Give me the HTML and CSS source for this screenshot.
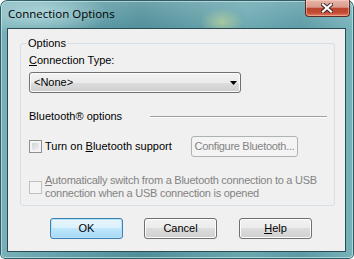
FILE: index.html
```html
<!DOCTYPE html>
<html>
<head>
<meta charset="utf-8">
<link rel="stylesheet" href="styles.css">
</head>
<body>
<div class="window">
  <div class="titlebar">
    <span class="title">Connection Options</span>
    <div class="close">
      <svg width="12" height="10" viewBox="0 0 12 10">
        <path d="M2 1.5 L10 8.5 M10 1.5 L2 8.5" stroke="#3d2320" stroke-width="4" stroke-linecap="square"/>
        <path d="M2 1.5 L10 8.5 M10 1.5 L2 8.5" stroke="#ffffff" stroke-width="2.2" stroke-linecap="square"/>
      </svg>
    </div>
  </div>
  <div class="client">
    <fieldset class="group">
      <legend class="legend">Options</legend>
      <div class="label"><u>C</u>onnection Type:</div>
      <div class="select">
        <span>&lt;None&gt;</span>
        <svg class="arrow" width="7" height="4" viewBox="0 0 7 4"><path d="M0 0 H7 L3.5 4 Z" fill="#000"/></svg>
      </div>
      <div class="section">
        <span class="section-text">Bluetooth® options</span>
        <div class="rule"></div>
      </div>
      <div class="row">
        <span class="check"></span>
        <span class="row-text">Turn on <u>B</u>luetooth support</span>
        <div class="btn btn-disabled config">Configure Bluetooth...</div>
      </div>
      <div class="row row-dis">
        <span class="check check-dis"></span>
        <span class="dis-text"><u>A</u>utomatically switch from a Bluetooth connection to a USB<br>connection when a USB connection is opened</span>
      </div>
    </fieldset>
    <div class="buttons">
      <div class="btn btn-default">OK</div>
      <div class="btn">Cancel</div>
      <div class="btn help"><u>H</u>elp</div>
    </div>
  </div>
</div>
</body>
</html>
```

FILE: styles.css
```css
html, body {
  margin: 0;
  padding: 0;
  background: #ffffff;
}

.window {
  width: 354px;
  height: 259px;
  box-sizing: border-box;
  display: flex;
  flex-direction: column;
  border-radius: 7px 7px 5px 5px;
  background:
    radial-gradient(ellipse 22px 14px at 222px 22px, rgba(214, 226, 150, 0.55), rgba(214, 226, 150, 0)),
    radial-gradient(ellipse 70px 22px at 40px 14px, rgba(190, 225, 228, 0.75), rgba(190, 225, 228, 0)),
    linear-gradient(180deg, rgba(255, 255, 255, 0.18) 0px, rgba(255, 255, 255, 0) 30px),
    linear-gradient(90deg, #78b1b9 0%, #6aa6af 12%, #4f8f99 40%, #5f9ca5 55%, #6aa8b0 70%, #5c9ba5 85%, #78b3bb 100%);
  box-shadow: inset 0 0 0 1px #2f5e67, inset 0 0 0 2px rgba(220, 240, 242, 0.55);
  font-family: "Liberation Sans", Arial, sans-serif;
  font-size: 11px;
  line-height: 13px;
  color: #000;
  white-space: nowrap;
}

.titlebar {
  height: 28px;
  display: flex;
  align-items: flex-start;
  padding-left: 8px;
}

.title {
  font-family: "Open Sans", "Liberation Sans", sans-serif;
  font-size: 11.5px;
  line-height: 16px;
  margin-top: 6px;
  color: #000;
}

.close {
  margin-left: auto;
  margin-right: 4px;
  width: 45px;
  height: 17px;
  box-sizing: border-box;
  border: 1px solid #5b2d25;
  border-top: none;
  border-radius: 0 0 4px 4px;
  background: linear-gradient(180deg, #e8b5aa 0%, #d99a8b 45%, #bd4530 52%, #c34a31 78%, #e07b5f 100%);
  box-shadow: inset 0 0 0 1px rgba(255, 220, 210, 0.45);
  display: flex;
  align-items: center;
  justify-content: center;
  padding-right: 2px;
}

.client {
  flex: 1;
  margin: 0 8px 7px 7px;
  border: 1px solid #2c4a51;
  background: #f0f0f0;
  display: flex;
  flex-direction: column;
}

.group {
  margin: 8px 10px 0 12px;
  padding: 0 7px 5px 8px;
  border: 1px solid #d5dfe5;
  border-radius: 3px;
  min-width: 0;
  display: flex;
  flex-direction: column;
}

.legend {
  padding: 0 1px;
  margin-left: -2px;
  line-height: 13px;
}

.label {
  margin-top: 4px;
}

.select {
  margin-top: 5px;
  width: 212px;
  height: 21px;
  box-sizing: border-box;
  border: 1px solid #707070;
  border-radius: 3px;
  background: linear-gradient(180deg, #f2f2f2 0%, #ebebeb 50%, #dddddd 50%, #cfcfcf 100%);
  box-shadow: inset 0 0 0 1px #fbfbfb;
  display: flex;
  align-items: center;
  justify-content: space-between;
  padding: 0 3px 0 4px;
}

.arrow {
  margin-top: 1px;
}

.section {
  margin-top: 17px;
  display: flex;
  align-items: center;
  height: 13px;
}

.section-text {
  width: 121px;
  flex: none;
}

.rule {
  flex: 1;
  height: 1px;
  background: #a0a0a0;
  border-bottom: 1px solid #ffffff;
  margin-top: 1px;
}

.row {
  margin-top: 13px;
  display: flex;
  align-items: center;
}

.check {
  width: 13px;
  height: 13px;
  box-sizing: border-box;
  flex: none;
  border: 1px solid #8e8f8f;
  background: linear-gradient(135deg, #c6cad0 0%, #e6e7e8 60%, #f6f6f6 100%);
  box-shadow: inset 0 0 0 2px #f4f4f4;
  margin-right: 3px;
}

.row-text {
  width: 146px;
  flex: none;
}

.btn {
  height: 21px;
  box-sizing: border-box;
  border: 1px solid #707070;
  border-radius: 3px;
  background: linear-gradient(180deg, #f2f2f2 0%, #ebebeb 50%, #dddddd 50%, #cfcfcf 100%);
  box-shadow: inset 0 0 0 1px #fcfcfc;
  display: flex;
  align-items: center;
  justify-content: center;
  width: 73px;
  flex: none;
}

.btn-disabled {
  border-color: #adb2b5;
  background: #f4f4f4;
  box-shadow: none;
  color: #838383;
}

.config {
  width: 107px;
  letter-spacing: -0.3px;
}

.row-dis {
  margin-top: 17px;
}

.check-dis {
  border-color: #c0c0c0;
  background: #f4f4f4;
  box-shadow: none;
}

.dis-text {
  color: #838383;
  letter-spacing: -0.25px;
}

.buttons {
  display: flex;
  margin: 12px 0 0 42px;
  gap: 21px;
}

.btn-default {
  border-color: #3c7fb1;
  background: linear-gradient(180deg, #eaf6fd 0%, #d9f0fc 50%, #bee6fd 50%, #a7d9f5 100%);
  box-shadow: inset 0 0 0 1px #b6e3f8;
}

.help {
  margin-left: 1px;
}
```
